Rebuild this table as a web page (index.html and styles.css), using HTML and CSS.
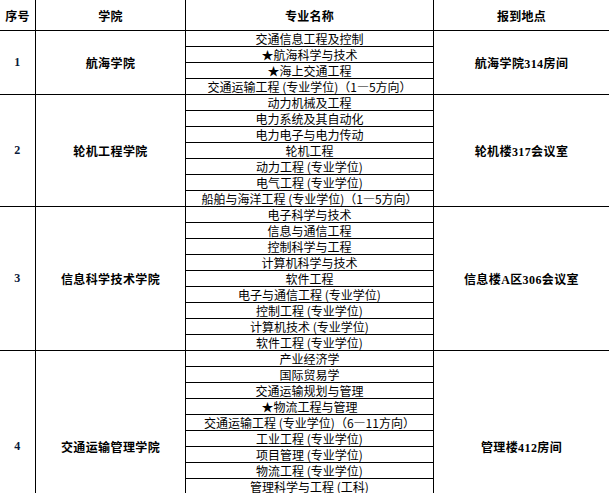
FILE: index.html
```html
<!DOCTYPE html>
<html lang="zh-CN">
<head>
<meta charset="utf-8">
<title>报到地点</title>
<link rel="stylesheet" href="styles.css">
</head>
<body>
<table class="sheet">
  <colgroup>
    <col class="c-no">
    <col class="c-college">
    <col class="c-major">
    <col class="c-place">
  </colgroup>
  <thead>
    <tr class="head">
      <th>序号</th>
      <th>学院</th>
      <th>专业名称</th>
      <th>报到地点</th>
    </tr>
  </thead>
  <tbody>
    <tr>
      <td class="no" rowspan="4">1</td>
      <td class="college" rowspan="4">航海学院</td>
      <td class="major">交通信息工程及控制</td>
      <td class="place" rowspan="4">航海学院314房间</td>
    </tr>
    <tr><td class="major">★航海科学与技术</td></tr>
    <tr><td class="major">★海上交通工程</td></tr>
    <tr><td class="major">交通运输工程 (专业学位)（1—5方向）</td></tr>

    <tr>
      <td class="no" rowspan="7">2</td>
      <td class="college" rowspan="7">轮机工程学院</td>
      <td class="major">动力机械及工程</td>
      <td class="place" rowspan="7">轮机楼317会议室</td>
    </tr>
    <tr><td class="major">电力系统及其自动化</td></tr>
    <tr><td class="major">电力电子与电力传动</td></tr>
    <tr><td class="major">轮机工程</td></tr>
    <tr><td class="major">动力工程 (专业学位)</td></tr>
    <tr><td class="major">电气工程 (专业学位)</td></tr>
    <tr><td class="major">船舶与海洋工程 (专业学位)（1—5方向）</td></tr>

    <tr>
      <td class="no" rowspan="9">3</td>
      <td class="college" rowspan="9">信息科学技术学院</td>
      <td class="major">电子科学与技术</td>
      <td class="place" rowspan="9">信息楼A区306会议室</td>
    </tr>
    <tr><td class="major">信息与通信工程</td></tr>
    <tr><td class="major">控制科学与工程</td></tr>
    <tr><td class="major">计算机科学与技术</td></tr>
    <tr><td class="major">软件工程</td></tr>
    <tr><td class="major">电子与通信工程 (专业学位)</td></tr>
    <tr><td class="major">控制工程 (专业学位)</td></tr>
    <tr><td class="major">计算机技术 (专业学位)</td></tr>
    <tr><td class="major">软件工程 (专业学位)</td></tr>

    <tr>
      <td class="no" rowspan="12">4</td>
      <td class="college" rowspan="12">交通运输管理学院</td>
      <td class="major">产业经济学</td>
      <td class="place" rowspan="12">管理楼412房间</td>
    </tr>
    <tr><td class="major">国际贸易学</td></tr>
    <tr><td class="major">交通运输规划与管理</td></tr>
    <tr><td class="major">★物流工程与管理</td></tr>
    <tr><td class="major">交通运输工程 (专业学位)（6—11方向）</td></tr>
    <tr><td class="major">工业工程 (专业学位)</td></tr>
    <tr><td class="major">项目管理 (专业学位)</td></tr>
    <tr><td class="major">物流工程 (专业学位)</td></tr>
    <tr><td class="major">管理科学与工程 (工科)</td></tr>
    <tr><td class="major">管理科学与工程 (理科)</td></tr>
    <tr><td class="major">企业管理</td></tr>
    <tr><td class="major">技术经济及管理</td></tr>
  </tbody>
</table>
</body>
</html>
```

FILE: styles.css
```css
html {
  overflow: hidden;
  background: #fff;
}

body {
  margin: 0;
  overflow: hidden;
  width: 609px;
  height: 493px;
}

.sheet {
  border-collapse: separate;
  border-spacing: 0;
  table-layout: fixed;
  width: 610px;
  font-family: "Noto Sans CJK SC", sans-serif;
  font-size: 12px;
  color: #000;
}

.c-no { width: 36px; }
.c-college { width: 150px; }
.c-major { width: 248px; }
.c-place { width: 176px; }

.sheet th,
.sheet td {
  padding: 0;
  border-right: 1px solid #000;
  border-bottom: 1px solid #000;
  text-align: center;
  white-space: nowrap;
  overflow: hidden;
}

.head th {
  height: 30px;
  font-weight: 700;
  letter-spacing: 0.3px;
  vertical-align: middle;
}

.major {
  height: 15px;
  line-height: 15px;
  vertical-align: bottom;
}

.no,
.college,
.place {
  font-family: "Liberation Serif", "Noto Sans CJK SC", serif;
  font-weight: 700;
  vertical-align: middle;
  letter-spacing: 0.4px;
}

.no {
  color: #0a1a3a;
}
```
